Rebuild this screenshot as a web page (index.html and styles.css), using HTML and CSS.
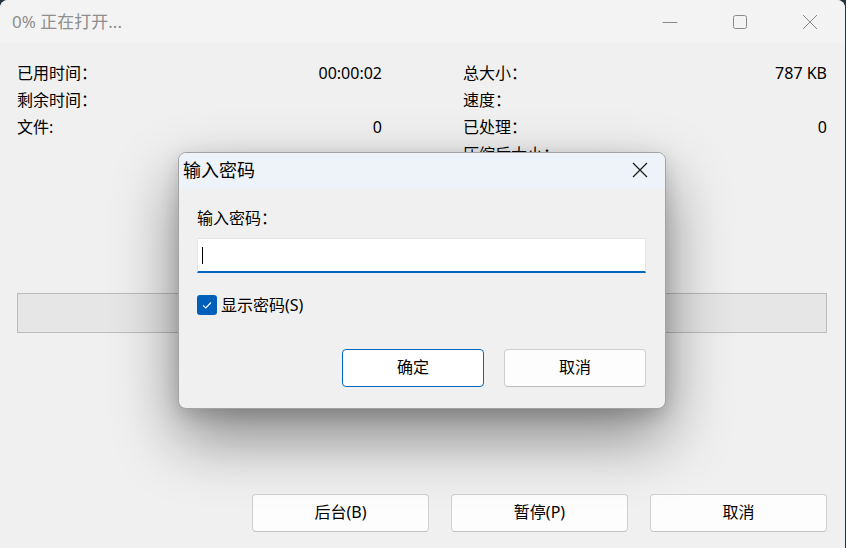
FILE: index.html
```html
<!DOCTYPE html>
<html lang="zh-CN">
<head>
<meta charset="utf-8">
<title>0% 正在打开...</title>
<link rel="stylesheet" href="styles.css">
</head>
<body>
<div class="window">
  <div class="titlebar">
    <span class="title">0% 正在打开...</span>
    <div class="controls">
      <span class="ctl"><svg width="16" height="16" viewBox="0 0 16 16"><path d="M0.5 8.5h15" stroke="#8a8a8a" stroke-width="1" fill="none"/></svg></span>
      <span class="ctl"><svg width="16" height="16" viewBox="0 0 16 16"><rect x="1.5" y="1.5" width="13" height="13" rx="2" stroke="#8a8a8a" stroke-width="1" fill="none"/></svg></span>
      <span class="ctl"><svg width="16" height="16" viewBox="0 0 16 16"><path d="M1 1L15 15M15 1L1 15" stroke="#8a8a8a" stroke-width="1" fill="none"/></svg></span>
    </div>
  </div>
  <div class="content">
    <div class="stats">
      <div class="col">
        <div class="row"><span>已用时间：</span><span>00:00:02</span></div>
        <div class="row"><span>剩余时间：</span><span></span></div>
        <div class="row"><span>文件:</span><span>0</span></div>
      </div>
      <div class="col">
        <div class="row"><span>总大小：</span><span>787 KB</span></div>
        <div class="row"><span>速度：</span><span></span></div>
        <div class="row"><span>已处理：</span><span>0</span></div>
        <div class="row"><span>压缩后大小：</span><span></span></div>
      </div>
    </div>
    <div class="progress"></div>
    <div class="actions">
      <button class="btn">后台(B)</button>
      <button class="btn">暂停(P)</button>
      <button class="btn">取消</button>
    </div>
  </div>

  <div class="dialog">
    <div class="dlg-title">
      <span>输入密码</span>
      <svg class="dlg-close" width="16" height="16" viewBox="0 0 16 16"><path d="M1 1L15 15M15 1L1 15" stroke="#1a1a1a" stroke-width="1.2" fill="none"/></svg>
    </div>
    <div class="dlg-body">
      <div class="dlg-label">输入密码：</div>
      <div class="input"><span class="caret"></span></div>
      <label class="check">
        <span class="box"><svg width="12" height="12" viewBox="0 0 12 12"><path d="M2 6.3L4.8 9L10 3.5" stroke="#fff" stroke-width="1.1" fill="none"/></svg></span>
        <span>显示密码(S)</span>
      </label>
      <div class="dlg-actions">
        <button class="dbtn primary">确定</button>
        <button class="dbtn">取消</button>
      </div>
    </div>
  </div>
</div>
</body>
</html>
```

FILE: styles.css
```css
* { box-sizing: border-box; }
html, body { margin: 0; padding: 0; }
body {
  width: 846px;
  height: 548px;
  background: #26323e;
  overflow: hidden;
  font-family: "Noto Sans", "Noto Sans CJK SC", sans-serif;
  font-size: 16px;
  color: #000;
}
.window {
  position: relative;
  width: 845px;
  height: 548px;
  background: #f0f0f0;
  border-radius: 8px 8px 0 0;
  display: flex;
  flex-direction: column;
  overflow: hidden;
}
.titlebar {
  height: 43px;
  background: #f3f3f3;
  display: flex;
  align-items: center;
  justify-content: space-between;
}
.title {
  padding-left: 12px;
  color: #8e8e8e;
  font-size: 17px;
  line-height: 20px;
  margin-top: 1px;
}
.controls { display: flex; height: 43px; }
.ctl {
  width: 70px;
  display: flex;
  align-items: center;
  justify-content: center;
}
.content {
  flex: 1;
  display: flex;
  flex-direction: column;
  padding: 16px 18px 16px 17px;
}
.stats {
  display: grid;
  grid-template-columns: 365px 364px;
  column-gap: 81px;
}
.row {
  height: 27px;
  display: flex;
  align-items: center;
  justify-content: space-between;
  line-height: 20px;
}
.progress {
  margin-top: 126px;
  height: 40px;
  background: #e6e6e6;
  border: 1px solid #bcbcbc;
}
.actions {
  margin-top: auto;
  display: flex;
  justify-content: flex-end;
  gap: 22px;
}
.btn {
  width: 177px;
  height: 38px;
  background: #fdfdfd;
  border: 1px solid #d0d0d0;
  border-bottom-color: #c2c2c2;
  border-radius: 4px;
  font: inherit;
  font-size: 16px;
  line-height: 20px;
  color: #000;
  padding: 0 0 2px;
}
.dialog {
  position: absolute;
  left: 178px;
  top: 152px;
  width: 488px;
  height: 257px;
  background: #f0f0f0;
  border: 1px solid #a2a2a2;
  border-radius: 8px;
  box-shadow: 0 28px 64px rgba(0,0,0,0.45), 0 6px 18px rgba(0,0,0,0.14);
  display: flex;
  flex-direction: column;
  overflow: hidden;
}
.dlg-title {
  height: 36px;
  background: #edf3f9;
  display: flex;
  align-items: center;
  justify-content: space-between;
  padding: 0 17px 2px 4px;
  font-size: 18px;
  line-height: 22px;
}
.dlg-body {
  padding: 19px 19px 0 18px;
  display: flex;
  flex-direction: column;
}
.dlg-label { line-height: 20px; }
.input {
  margin-top: 10px;
  height: 35px;
  background: #fff;
  border: 1px solid #e4e4e4;
  border-bottom: 2px solid #0067c0;
  border-radius: 2px 2px 0 0;
  display: flex;
  align-items: center;
  padding-left: 4px;
}
.caret {
  width: 1px;
  height: 17px;
  background: #000;
}
.check {
  margin-top: 22px;
  display: flex;
  align-items: center;
  gap: 4px;
  line-height: 20px;
}
.box {
  width: 20px;
  height: 20px;
  background: #005fb8;
  border-radius: 3px;
  display: flex;
  align-items: center;
  justify-content: center;
}
.dlg-actions {
  margin-top: 34px;
  display: flex;
  justify-content: flex-end;
  gap: 20px;
}
.dbtn {
  width: 142px;
  height: 38px;
  background: #fdfdfd;
  border: 1px solid #cfcfcf;
  border-bottom-color: #bdbdbd;
  border-radius: 4px;
  font: inherit;
  font-size: 16px;
  line-height: 20px;
  color: #000;
  padding: 0 0 2px;
}
.dbtn.primary {
  background: #fff;
  border: 1px solid #0067c0;
}
```
